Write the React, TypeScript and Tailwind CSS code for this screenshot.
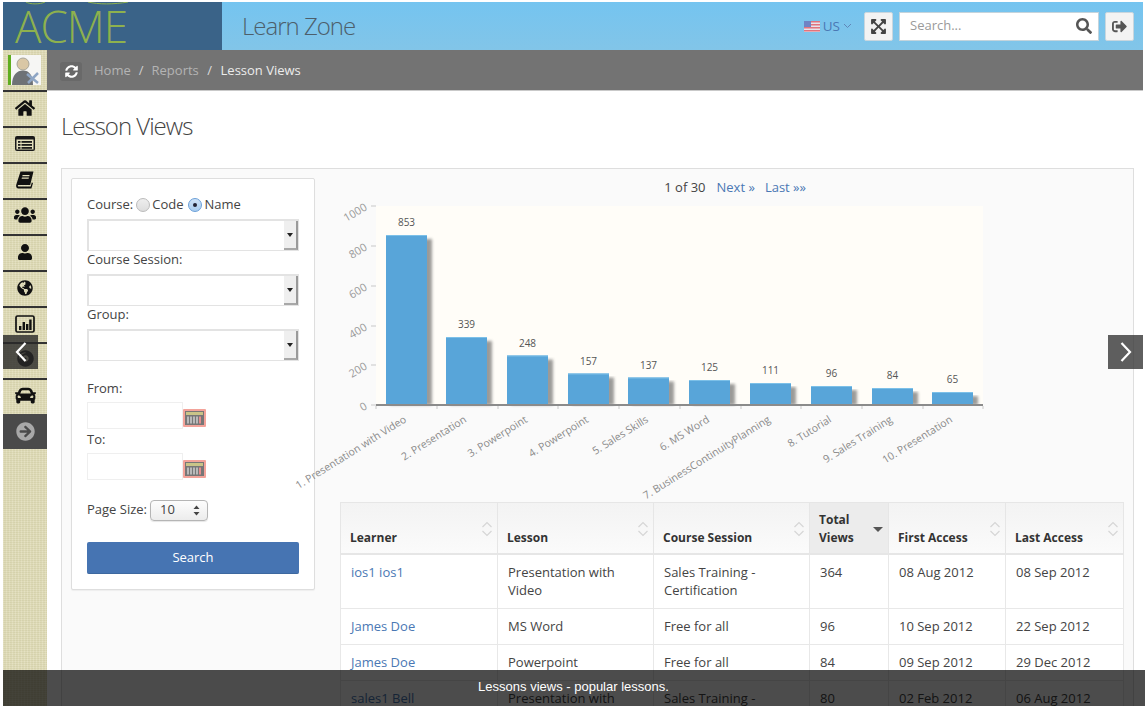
import React from "react";
import {
  FaHome, FaUsers, FaUser, FaGlobeAmericas, FaCompactDisc, FaCar,
  FaArrowCircleRight, FaSyncAlt, FaExpandArrowsAlt, FaSearch, FaSignOutAlt,
} from "react-icons/fa";

function ListIcon() {
  return (
    <svg width="20" height="15" viewBox="0 0 20 15">
      <rect width="20" height="15" rx="2" fill="#1a1a1a" />
      <rect x="1.5" y="3.5" width="17" height="10" fill="#e4e0bd" />
      {[5, 8, 11].map((y) => (
        <g key={y} fill="#1a1a1a">
          <rect x="3" y={y} width="2.5" height="1.8" />
          <rect x="6.5" y={y} width="10.5" height="1.8" />
        </g>
      ))}
    </svg>
  );
}

function BookIcon() {
  return (
    <svg width="18" height="18" viewBox="0 0 18 18">
      <path d="M4.5 0.5 H17.5 L14.2 14 H2.6 C1.6 14 1.4 15.6 2.6 15.6 H14.6 L15.8 11.5 L17 12 L15.4 17.5 H2.4 C0.4 17.5 -0.3 15.6 0.3 13.4 Z" fill="#111" />
      <path d="M6.6 4 H13.6 L13.3 5.2 H6.3 Z M5.9 6.6 H12.9 L12.6 7.8 H5.6 Z" fill="#e4e0bd" />
    </svg>
  );
}

function ChartIcon() {
  return (
    <svg width="20" height="18" viewBox="0 0 20 18">
      <rect x="1" y="1" width="18" height="16" rx="1.5" fill="none" stroke="#111" strokeWidth="1.7" />
      <g fill="#111">
        <rect x="4" y="11" width="2.4" height="4" />
        <rect x="7.6" y="7" width="2.4" height="8" />
        <rect x="11" y="9" width="2.4" height="6" />
        <rect x="14.2" y="4.5" width="2.4" height="10.5" />
      </g>
    </svg>
  );
}

const NAV = [
  { n: <FaHome size={20} />, c: "pb-[3px]" },
  { n: <ListIcon />, c: "pb-[3px]" },
  { n: <BookIcon />, c: "pb-[3px]" },
  { n: <FaUsers size={22} />, c: "pb-[5px]" },
  { n: <FaUser size={16} />, c: "pb-[3px]" },
  { n: <FaGlobeAmericas size={16} />, c: "pb-[3px]" },
  { n: <ChartIcon />, c: "pb-[3px]" },
  { n: <FaCompactDisc size={17} />, c: "pb-[6px]" },
  { n: <FaCar size={21} />, c: "pb-[3px]" },
];

const BARS = [
  { v: 853, x: 386, t: 235, label: "1. Presentation with Video" },
  { v: 339, x: 446, t: 337, label: "2. Presentation" },
  { v: 248, x: 507, t: 355.5, label: "3. Powerpoint" },
  { v: 157, x: 568, t: 373.5, label: "4. Powerpoint" },
  { v: 137, x: 628, t: 377.5, label: "5. Sales Skills" },
  { v: 125, x: 689, t: 380, label: "6. MS Word" },
  { v: 111, x: 750, t: 383, label: "7. BusinessContinuityPlanning" },
  { v: 96, x: 811, t: 386, label: "8. Tutorial" },
  { v: 84, x: 872, t: 388, label: "9. Sales Training" },
  { v: 65, x: 932, t: 392, label: "10. Presentation" },
];

const ROWS = [
  ["ios1 ios1", "Presentation with Video", "Sales Training - Certification", "364", "08 Aug 2012", "08 Sep 2012"],
  ["James Doe", "MS Word", "Free for all", "96", "10 Sep 2012", "22 Sep 2012"],
  ["James Doe", "Powerpoint", "Free for all", "84", "09 Sep 2012", "29 Dec 2012"],
  ["sales1 Bell", "Presentation with Video", "Sales Training - Certification", "80", "02 Feb 2012", "06 Aug 2012"],
];

function Chart() {
  // coordinates are page pixels minus the svg origin (330, 196)
  const ox = 330;
  const oy = 196;
  return (
    <svg width="670" height="305" className="block overflow-visible" style={{ fontFamily: '"Open Sans", sans-serif' }}>
      <defs>
        <filter id="sh" x="-20%" y="-5%" width="150%" height="110%">
          <feGaussianBlur stdDeviation="1.6" />
        </filter>
      </defs>
      <rect x={376 - ox} y={206 - oy} width={607} height={199} fill="#fffdf8" />
      {[206, 246, 286, 326, 365, 405].map((y, i) => (
        <g key={y}>
          <line x1={371 - ox} x2={376 - ox} y1={y - oy} y2={y - oy} stroke="#c8c8c8" />
          <text
            x={366 - ox}
            y={y - oy + 4}
            textAnchor="end"
            fontSize="11"
            fill="#9a9a9a"
            transform={`rotate(-30 ${366 - ox} ${y - oy})`}
          >
            {[1000, 800, 600, 400, 200, 0][i]}
          </text>
        </g>
      ))}
      {BARS.map((b) => (
        <g key={b.label}>
          <rect x={b.x - ox + 4} y={b.t - oy + 4} width={42} height={405 - b.t - 4} fill="#5a5a5a" opacity="0.6" filter="url(#sh)" />
          <rect x={b.x - ox} y={b.t - oy} width={41} height={405 - b.t} fill="#58a5d9" />
          <rect x={b.x - ox} y={b.t - oy} width={41} height={1} fill="#7cc0e8" />
          <text x={b.x - ox + 20.5} y={b.t - oy - 9} textAnchor="middle" fontSize="10" fill="#555">
            {b.v}
          </text>
          <text
            x={b.x - ox + 19}
            y={405 - oy + 17}
            textAnchor="end"
            fontSize="10.5"
            fill="#8a8a8a"
            transform={`rotate(-32 ${b.x - ox + 19} ${405 - oy + 13})`}
          >
            {b.label}
          </text>
        </g>
      ))}
      <rect x={376 - ox} y={404 - oy} width={607} height={2} fill="#8b8b8b" />
      {[376, 437, 498, 558, 619, 680, 741, 801, 862, 923, 983].map((x) => (
        <line key={x} x1={x - ox} x2={x - ox} y1={406 - oy} y2={409 - oy} stroke="#c8c8c8" />
      ))}
    </svg>
  );
}

function SelectBox() {
  return (
    <div className="flex h-[32px] w-[212px] border border-t-2 border-l-2 border-[#e3e3e3] bg-white">
      <div className="flex-1" />
      <div className="flex w-[14px] items-center justify-center border-r-2 border-b-2 border-r-[#9a9a9a] border-b-[#a8a8a8] bg-[#efefef]">
        <span className="border-x-[3px] border-t-[4px] border-x-transparent border-t-[#222]" />
      </div>
    </div>
  );
}

function DateField() {
  return (
    <div className="flex items-end">
      <div className="h-[27px] w-[96px] border border-[#efefef] bg-white" />
      <svg width="23" height="18" className="mb-[2px]" viewBox="0 0 23 18">
        <rect width="23" height="18" rx="1" fill="#f3a39a" />
        <rect x="2" y="2" width="19" height="14" fill="#777" />
        <rect x="3" y="3" width="17" height="3" fill="#c9c488" />
        {[4, 7, 10, 13].map((x) => (
          <rect key={x} x={x} y="7.5" width="2" height="7" fill="#b9b9b9" />
        ))}
        <rect x="16" y="7.5" width="2" height="7" fill="#e58d8d" />
      </svg>
    </div>
  );
}

function Sort({ active }: { active?: boolean }) {
  if (active) {
    return <span className="absolute right-[5px] top-[24px] border-x-[5px] border-t-[5px] border-x-transparent border-t-[#555]" />;
  }
  return (
    <svg className="absolute right-[4px] top-[18px]" width="12" height="16" viewBox="0 0 12 16" fill="none" stroke="#d6d6d6" strokeWidth="1.2">
      <path d="M1.5 6 L6 1.5 L10.5 6" />
      <path d="M1.5 10 L6 14.5 L10.5 10" />
    </svg>
  );
}

const COLS = [
  { t: "Learner", w: "w-[157px]" },
  { t: "Lesson", w: "w-[156px]" },
  { t: "Course Session", w: "w-[156px]" },
  { t: "Total Views", w: "w-[79px]", active: true },
  { t: "First Access", w: "w-[117px]" },
  { t: "Last Access", w: "w-[118px]" },
];

function Table() {
  return (
    <table className="w-[783px] table-fixed border-collapse border border-[#e4e4e4] text-[13px] leading-[18px] text-[#444]">
      <thead>
        <tr className="h-[51px] bg-gradient-to-b from-[#f3f3f3] to-[#fbfbfb]">
          {COLS.map((c) => (
            <th
              key={c.t}
              className={`relative border border-b-2 border-[#e6e6e6] pb-[6px] pl-[9px] pr-[20px] text-left align-bottom text-[12px] font-bold text-[#333] ${c.w} ${c.active ? "bg-[#ececec]" : ""}`}
            >
              {c.t}
              <Sort active={c.active} />
            </th>
          ))}
        </tr>
      </thead>
      <tbody className="bg-white">
        {ROWS.map((r, i) => (
          <tr key={i}>
            {r.map((c, j) => (
              <td
                key={j}
                className={`border border-[#e8e8e8] px-[10px] pb-[9px] pt-[8px] align-top ${j === 0 ? "text-[#4a78b4]" : ""}`}
              >
                {c}
              </td>
            ))}
          </tr>
        ))}
      </tbody>
    </table>
  );
}

export default function App() {
  return (
    <div
      className="relative h-[706px] w-[1145px] overflow-hidden bg-white pl-[3px] pt-[2px] text-[13px] text-[#444]"
      style={{ fontFamily: '"Open Sans", sans-serif' }}
    >
      <div className="w-[1140px]">
        {/* Header */}
        <header className="flex h-[48px] bg-gradient-to-b from-[#74c4f0] to-[#82c5e8]">
          <div className="relative flex w-[219px] items-center overflow-hidden bg-[#3a6388] pl-[12px]">
            <span className="text-[44px] font-light leading-none tracking-[-1px] text-[#8eb14e]">ACME</span>
            <svg className="absolute left-[15px] top-0" width="120" height="3" viewBox="0 0 120 3" fill="none" stroke="#8eb14e" strokeWidth="1">
              <path d="M8 0 C12 2.5 22 2.5 27 0 M70 0 C80 2.5 96 2.5 110 0" />
            </svg>
          </div>
          <div className="flex flex-1 items-center pl-[20px] pr-[9px]">
            <span className="text-[24px] font-light tracking-[-1px] text-[#4d5f6b]">Learn Zone</span>
            <div className="ml-auto flex items-center">
              <svg width="16" height="11" viewBox="0 0 16 11" className="mr-[3px]">
                <rect width="16" height="11" fill="#e9e3ea" />
                {[0, 3, 6, 9].map((y) => (
                  <rect key={y} y={y} width="16" height="1.5" fill="#e2737d" />
                ))}
                <rect width="7" height="6" fill="#6f83c4" />
              </svg>
              <span className="text-[13.5px] text-[#4a78b4]">US</span>
              <svg width="9" height="6" viewBox="0 0 9 6" className="ml-[3px] mr-[12px]" fill="none" stroke="#5f86b8">
                <path d="M1 1 L4.5 4.5 L8 1" />
              </svg>
              <button className="flex h-[29px] w-[29px] items-center justify-center rounded-[2px] border border-[#c8d6de] bg-[#f3f3f3] text-[#444]">
                <FaExpandArrowsAlt size={17} />
              </button>
              <div className="ml-[6px] flex h-[29px] w-[200px] items-center border border-[#c4d4dc] bg-white pl-[10px] pr-[6px]">
                <span className="text-[13px] text-[#9a9a9a]">Search...</span>
                <FaSearch size={16} className="ml-auto text-[#555]" />
              </div>
              <button className="ml-[6px] flex h-[29px] w-[29px] items-center justify-center rounded-[2px] border border-[#c8d6de] bg-[#f3f3f3] text-[#555]">
                <FaSignOutAlt size={15} />
              </button>
            </div>
          </div>
        </header>

        <div className="flex">
          {/* Sidebar */}
          <aside className="h-[656px] w-[44px] shrink-0 bg-[#e1ddb9] bg-[repeating-linear-gradient(0deg,rgba(255,255,255,0.07)_0px,rgba(255,255,255,0.07)_1px,rgba(110,110,60,0.05)_1px,rgba(110,110,60,0.05)_2px),repeating-linear-gradient(90deg,rgba(255,255,255,0.07)_0px,rgba(255,255,255,0.07)_1px,rgba(110,110,60,0.05)_1px,rgba(110,110,60,0.05)_3px)]">
            <div className="flex h-[40px] items-center pl-[5px]">
              <div className="flex h-[30px] w-[33px] items-end justify-center overflow-hidden border-l-[3px] border-[#5fae1e] bg-[#f6f6f4]">
                <svg width="28" height="29" viewBox="0 0 28 29">
                  <circle cx="11" cy="8" r="6" fill="#d9c7a5" stroke="#a8a598" />
                  <path d="M0 29 C0 19 5 14.5 11 14.5 C17 14.5 21 19 21 29 Z" fill="#6e7276" />
                  <path d="M15 18 L26 27 M26 17 L16 27" stroke="#8fa6c4" strokeWidth="2.5" />
                </svg>
              </div>
            </div>
            {NAV.map(({ n, c }, i) => (
              <div key={i} className={`flex h-[36px] items-center justify-center border-t-2 border-[#333] text-[#111] ${c}`}>
                {n}
              </div>
            ))}
            <div className="flex h-[35px] items-center justify-center bg-[#4a4a4a] text-[#a8a8a8]">
              <FaArrowCircleRight size={19} />
            </div>
          </aside>

          {/* Main column */}
          <div className="min-w-0 flex-1">
            <nav className="flex h-[41px] items-center border-b border-[#c9c9c9] bg-[#737373] pl-[13px] pt-[2px] text-[13px]">
              <span className="flex h-[19px] w-[22px] items-center justify-center rounded-[3px] bg-[#696969] text-white">
                <FaSyncAlt size={13} />
              </span>
              <span className="ml-[12px] text-[#b4b4b4]">Home</span>
              <span className="mx-[8px] text-[#cfcfcf]">/</span>
              <span className="text-[#b4b4b4]">Reports</span>
              <span className="mx-[8.5px] text-[#dcdcdc]">/</span>
              <span className="text-[#ececec]">Lesson Views</span>
            </nav>

            <main className="pl-[14px] pr-[9px]">
              <h1 className="mb-[26px] mt-[18px] text-[24px] font-light leading-[33px] tracking-[-1px] text-[#444]">Lesson Views</h1>
              <section className="flex h-[560px] gap-[15px] overflow-hidden border border-[#dedede] bg-[#fafafa] pl-[9px] pt-[9px]">
                {/* Filter card */}
                <div className="h-[412px] w-[244px] shrink-0 rounded-[2px] border border-[#dedede] bg-white pl-[15px] pt-[16px] shadow-[0_1px_1px_rgba(0,0,0,0.05)]">
                  <div className="flex h-[20px] items-center">
                    <span>Course:</span>
                    <span className="ml-[3px] h-[14px] w-[14px] rounded-full border border-[#bbb] bg-gradient-to-b from-[#eee] to-[#ddd]" />
                    <span className="ml-[2px]">Code</span>
                    <span className="ml-[5px] flex h-[14px] w-[14px] items-center justify-center rounded-full border border-[#6a9fd8] bg-gradient-to-b from-[#cfe2f6] to-[#a9cdf0]">
                      <span className="h-[4px] w-[4px] rounded-full bg-[#223]" />
                    </span>
                    <span className="ml-[2px]">Name</span>
                  </div>
                  <div className="mt-[4px]"><SelectBox /></div>
                  <div className="mb-[7px] leading-[16px]">Course Session:</div>
                  <SelectBox />
                  <div className="mb-[7px] leading-[16px]">Group:</div>
                  <SelectBox />
                  <div className="mt-[18px] leading-[18px]">From:</div>
                  <div className="mt-[5px]"><DateField /></div>
                  <div className="leading-[20px]">To:</div>
                  <div className="mt-[4px]"><DateField /></div>
                  <div className="mt-[19px] flex h-[22px] items-center">
                    <span>Page Size:</span>
                    <span className="relative ml-[3px] flex h-[21px] w-[58px] items-center rounded-[4px] border border-[#b5b5b5] bg-gradient-to-b from-[#fdfdfd] to-[#ececec] pl-[9px] shadow-[0_1px_1px_rgba(0,0,0,0.1)]">
                      10
                      <svg width="7" height="11" viewBox="0 0 7 11" className="absolute right-[7px] top-[4px]" fill="#444">
                        <path d="M3.5 0.5 L6.5 4 H0.5 Z" />
                        <path d="M3.5 10.5 L6.5 7 H0.5 Z" />
                      </svg>
                    </span>
                  </div>
                  <button className="mt-[21px] h-[32px] w-[212px] rounded-[2px] border-b border-[#3d689f] bg-[#4674b2] pt-[1px] text-center text-[13px] text-white">
                    Search
                  </button>
                </div>

                {/* Right column */}
                <div className="min-w-0 flex-1">
                  <div className="ml-[24px] h-[18px] w-[641px] text-[13px] leading-[19px] text-[#444]">
                    <span className="inline-block w-[452px] text-right">
                      1 of 30
                      <span className="ml-[11px] text-[#4a78b4]">Next »</span>
                      <span className="ml-[10px] text-[#4a78b4]">Last »»</span>
                    </span>
                  </div>
                  <Chart />
                  <div className="ml-[10px] mt-[1px]"><Table /></div>
                </div>
              </section>
            </main>
          </div>
        </div>
      </div>

      {/* Slider chrome over the page */}
      <div className="absolute left-[3px] top-[335px] flex h-[34px] w-[35px] items-center justify-center bg-[rgba(40,40,40,0.8)]">
        <svg width="12" height="20" viewBox="0 0 12 20" fill="none" stroke="#fff" strokeWidth="2.2">
          <path d="M10.5 1 L2 10 L10.5 19" />
        </svg>
      </div>
      <div className="absolute left-[1108px] top-[335px] flex h-[34px] w-[35px] items-center justify-center bg-[rgba(50,50,50,0.78)]">
        <svg width="12" height="20" viewBox="0 0 12 20" fill="none" stroke="#fff" strokeWidth="2.2">
          <path d="M1.5 1 L10 10 L1.5 19" />
        </svg>
      </div>
      <div
        className="absolute bottom-0 left-[3px] right-0 flex h-[36px] items-center justify-center bg-[rgba(0,0,0,0.7)] pb-[2px] pr-[1px] text-[13px] text-white"
        style={{ fontFamily: '"Liberation Sans", sans-serif' }}
      >
        Lessons views - popular lessons.
      </div>
    </div>
  );
}
